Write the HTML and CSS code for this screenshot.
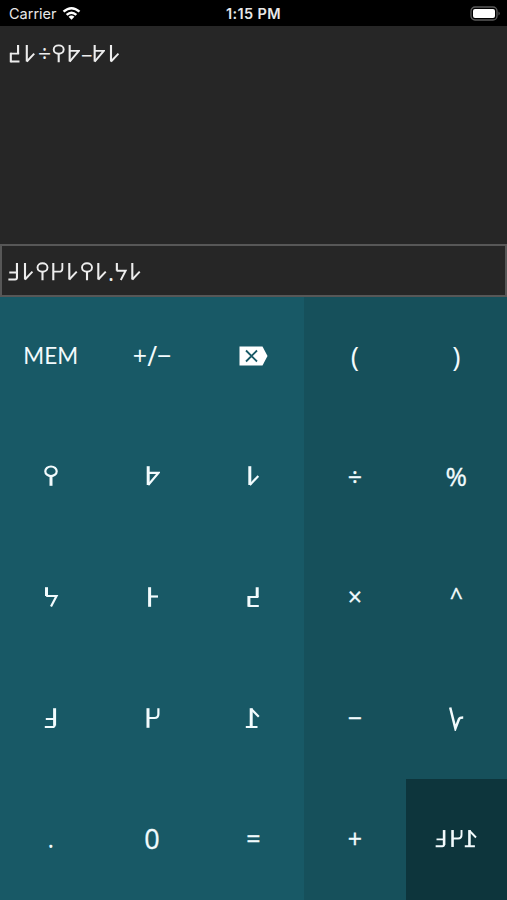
FILE: index.html
```html
<!DOCTYPE html>
<html lang="en">
<head>
<meta charset="utf-8">
<title>Calculator</title>
<link rel="stylesheet" href="styles.css">
</head>
<body>
<svg class="defs" aria-hidden="true">
  <symbol id="n1" viewBox="0 0 16 22"><path d="M6.2 20V1.2"/><path class="fine" d="M.8 20H12.5M6.2 2L13.8 9.8"/></symbol>
  <symbol id="n2" viewBox="0 0 16 22"><path d="M4 1.2V20.8"/><path class="fine" d="M4 11H10.5Q14.4 11 14.4 7V1.2"/></symbol>
  <symbol id="n3" viewBox="0 0 16 22"><path d="M11.6 1.2V18.5"/><path class="fine" d="M11.6 18Q11.6 20 9.5 20H1.8M11.6 12H2.8"/></symbol>
  <symbol id="n4" viewBox="0 0 16 22"><path d="M12.2 1.2V11M3.9 10V20.8"/><path class="fine" d="M13.4 11H3.4M3.4 20H13.8"/></symbol>
  <symbol id="n5" viewBox="0 0 16 22"><path d="M5.6 1.2V20.8"/><path class="fine" d="M5.6 10.5H14"/></symbol>
  <symbol id="n6" viewBox="0 0 16 22"><path d="M3.5 1.2V10"/><path class="fine" d="M3.2 10H13.5L8 20.5"/></symbol>
  <symbol id="n7" viewBox="0 0 16 22"><path d="M4.8 1.2V20"/><path class="fine" d="M4.8 20L13.3 11"/></symbol>
  <symbol id="n8" viewBox="0 0 16 22"><path d="M4.2 1.2V20"/><path class="fine" d="M4.2 20L14.6 7.8H4.2"/></symbol>
  <symbol id="n9" viewBox="0 0 16 22"><ellipse class="fine" cx="8" cy="6.3" rx="5.7" ry="4.8"/><path d="M8 11V20.8"/></symbol>
</svg>
<main class="app">
  <header class="status">
    <div class="carrier">Carrier
      <svg class="wifi" viewBox="0 0 20 15"><path d="M1.6 5.6Q10-1.8 18.4 5.6M4.9 8.9Q10 4.4 15.1 8.9"/><path class="solid" d="M6.9 10.8Q10 8.2 13.1 10.8L10 14.2Z"/></svg>
    </div>
    <time class="clock">1:15 PM</time>
    <svg class="battery" viewBox="0 0 31 16"><rect class="shell" x="1" y="1" width="26" height="13" rx="4"/><rect class="charge" x="3" y="3" width="22" height="9" rx="2"/><path class="shell-tip" d="M28.5 5.5Q31 7.5 28.5 9.5Z"/></svg>
  </header>
  <section class="history">
    <svg class="line" viewBox="0 0 500 20">
      <use href="#n4" x="7.4" width="14" height="19.3"/><use href="#n7" x="22.6" width="14" height="19.3"/>
      <text x="44.5" y="18">÷</text>
      <use href="#n9" x="51.7" width="14" height="19.3"/><use href="#n8" x="66" width="14" height="19.3"/>
      <text class="minus" x="86.7" y="18.5">−</text>
      <use href="#n8" x="91" width="14" height="19.3"/><use href="#n7" x="106.8" width="14" height="19.3"/>
    </svg>
  </section>
  <section class="entry">
    <svg class="line" viewBox="0 0 500 20">
      <use href="#n3" x="6.8" width="14" height="19.3"/><use href="#n7" x="20.8" width="14" height="19.3"/>
      <use href="#n9" x="35.5" width="14" height="19.3"/><use href="#n2" x="49.8" width="14" height="19.3"/>
      <use href="#n7" x="65.1" width="14" height="19.3"/><use href="#n9" x="80" width="14" height="19.3"/>
      <use href="#n7" x="94.1" width="14" height="19.3"/>
      <text x="111" y="18.5">.</text>
      <use href="#n6" x="113.8" width="14" height="19.3"/><use href="#n7" x="128.1" width="14" height="19.3"/>
    </svg>
  </section>
  <section class="keys">
    <div class="key word">MEM</div>
    <div class="key sign">+<span class="slash">/</span>−</div>
    <div class="key"><svg class="erase" viewBox="0 0 29 20"><path class="tag" d="M.5.5H23.5L28.5 10L23.5 19.5H.5Z"/><path class="cross" d="M7 4.5L18 15.5M18 4.5L7 15.5"/></svg></div>
    <div class="key op paren">(</div>
    <div class="key op paren">)</div>

    <div class="key"><svg class="digit"><use href="#n9"/></svg></div>
    <div class="key"><svg class="digit"><use href="#n8"/></svg></div>
    <div class="key"><svg class="digit"><use href="#n7"/></svg></div>
    <div class="key op math">÷</div>
    <div class="key op percent">%</div>

    <div class="key"><svg class="digit"><use href="#n6"/></svg></div>
    <div class="key"><svg class="digit"><use href="#n5"/></svg></div>
    <div class="key"><svg class="digit"><use href="#n4"/></svg></div>
    <div class="key op math">×</div>
    <div class="key op caret">^</div>

    <div class="key"><svg class="digit"><use href="#n3"/></svg></div>
    <div class="key"><svg class="digit"><use href="#n2"/></svg></div>
    <div class="key"><svg class="digit"><use href="#n1"/></svg></div>
    <div class="key op math">−</div>
    <div class="key op"><svg class="root" viewBox="0 0 16 26"><path d="M2.2 2.5L7.4 23.5L11 14Q11.8 12.5 15.2 12.5"/></svg></div>

    <div class="key dot">.</div>
    <div class="key zero">0</div>
    <div class="key math">=</div>
    <div class="key op math">+</div>
    <div class="key total"><svg class="digit"><use href="#n3"/></svg><svg class="digit"><use href="#n2"/></svg><svg class="digit"><use href="#n1"/></svg></div>
  </section>
</main>
</body>
</html>
```

FILE: styles.css
```css
* { box-sizing: border-box; }
body { margin: 0; background: #000; color: #f2fbfd; font-family: "Open Sans", "Noto Sans", sans-serif; }
.defs { display: block; width: 0; height: 0; }
.app { width: 507px; height: 900px; display: grid; grid-template-rows: 26px 218px 53px 603px; overflow: hidden; }

.status { display: grid; grid-template-columns: 1fr auto 1fr; align-items: center; padding: 1px 6px 0 9px; background: #000; color: #e8e8e8; font-family: Inter, sans-serif; font-size: 14.5px; }
.carrier { display: flex; align-items: center; gap: 5px; letter-spacing: 0; }
.wifi { width: 19px; height: 15px; fill: none; stroke: #fff; stroke-width: 2.6; }
.wifi .solid { fill: #fff; stroke: none; }
.clock { font-weight: 600; font-size: 14.5px; letter-spacing: .35px; margin-right: 3px; }
.battery { width: 31px; height: 16px; justify-self: end; }
.shell { fill: #000; stroke: #5b5b5b; stroke-width: 1.3; }
.charge { fill: #fff; }
.shell-tip { fill: #5b5b5b; }

.history, .entry { background: #262626; }
.history { padding-top: 18px; }
.entry { border: 2px solid #575757; padding-top: 16px; }
.line { display: block; width: 500px; height: 20px; fill: none; stroke: #ededed; stroke-width: 2.4; overflow: visible; }
.line .fine { stroke-width: 2; }
.entry .line { margin-left: -2px; }
.line text { fill: #ededed; stroke: none; font-size: 23px; text-anchor: middle; }
.line .minus { font-size: 20px; }

.keys { display: grid; grid-template-columns: repeat(5, 1fr); grid-template-rows: repeat(5, 1fr); background: #185966; }
.key { display: flex; align-items: center; justify-content: center; padding-bottom: 3px; line-height: 1; font-size: 25px; }
.op { background: #16505b; }
.total { background: #0d353c; gap: 1px; }
.digit { width: 16px; height: 22px; fill: none; stroke: #f2fbfd; stroke-width: 3; }
.fine { stroke-width: 2.2; }
.total .digit { width: 14px; height: 19px; }
.word { font-family: Lato, sans-serif; font-size: 22.5px; }
.sign { font-size: 25px; }
.slash { font-size: 27px; }
.erase { width: 29px; height: 20px; }
.tag { fill: #fff; }
.cross { fill: none; stroke: #185966; stroke-width: 1.8; }
.root { width: 16px; height: 26px; fill: none; stroke: #f2fbfd; stroke-width: 2.5; }
.paren { font-size: 28px; }
.percent { font-size: 26px; -webkit-text-stroke: .3px #f2fbfd; }
.zero { font-size: 27px; -webkit-text-stroke: .3px #f2fbfd; }
.caret { font-size: 23px; -webkit-text-stroke: .3px #f2fbfd; }
.math { font-size: 25px; -webkit-text-stroke: .3px #f2fbfd; }
```
